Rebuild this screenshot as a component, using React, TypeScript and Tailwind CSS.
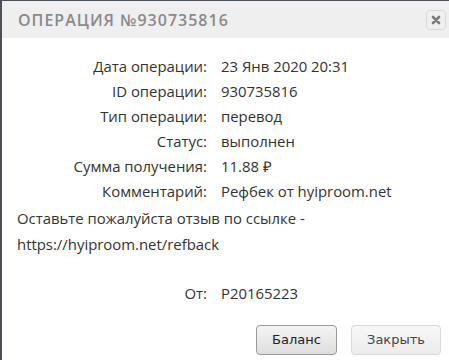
const rows = [
  ["Дата операции:", "23 Янв 2020 20:31"],
  ["ID операции:", "930735816"],
  ["Тип операции:", "перевод"],
  ["Статус:", "выполнен"],
  ["Сумма получения:", "11.88 ₽"],
  ["Комментарий:", "Рефбек от hyiproom.net"],
];

export default function App() {
  return (
    <div className="h-[360px] w-[449px] overflow-hidden bg-white">
      <div className="h-full border-l-2 border-t border-[#4b5157] bg-white">
        {/* header */}
        <div className="flex h-[37px] items-center justify-between bg-[#efefef] pl-[16px] pr-[3px]">
          <h1 className="font-['Open_Sans',sans-serif] text-[16px] font-semibold tracking-[1px] text-[#8a8a8a] uppercase">
            Операция №930735816
          </h1>
          <button className="flex h-[20px] w-[20px] items-center justify-center rounded-[4px] border border-[#d8d8d8] bg-[#efefef]">
            <svg width="10" height="10" viewBox="0 0 10 10">
              <path d="M2 2 L8 8 M8 2 L2 8" stroke="#7a7a7a" strokeWidth="2.6" strokeLinecap="round" />
            </svg>
          </button>
        </div>

        {/* body */}
        <div className="pt-[16px] font-['Open_Sans',sans-serif] text-[14.9px] text-[#333]">
          {rows.map(([label, value]) => (
            <div key={label} className="flex h-[25px] items-center">
              <span className="w-[205px] text-right">{label}</span>
              <span className="pl-[14px]">{value}</span>
            </div>
          ))}
          <div className="pl-[15px] pt-[1px] leading-[26px]">
            Оставьте пожалуйста отзыв по ссылке -<br />
            https://hyiproom.net/refback
          </div>
          <div className="mt-[24px] flex h-[25px] items-center">
            <span className="w-[205px] text-right">От:</span>
            <span className="pl-[14px]">P20165223</span>
          </div>
        </div>

        {/* footer */}
        <div className="mt-[19px] flex justify-end gap-[14px] pr-[8px] font-['DejaVu_Sans',sans-serif] text-[13px]">
          <button className="h-[30px] w-[81px] rounded-[4px] border border-[#9a9a9a] bg-gradient-to-b from-[#f4f4f4] to-[#dedede] text-[#222]">
            Баланс
          </button>
          <button className="h-[30px] w-[90px] rounded-[4px] border border-[#dadada] bg-gradient-to-b from-[#f7f7f7] to-[#ececec] text-[#444]">
            Закрыть
          </button>
        </div>
      </div>
    </div>
  );
}
